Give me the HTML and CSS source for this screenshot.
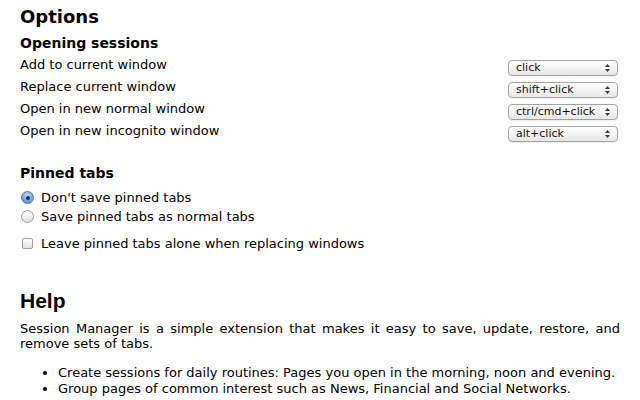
FILE: index.html
```html
<!DOCTYPE html>
<html>
<head>
<meta charset="utf-8">
<title>Options</title>
<link rel="stylesheet" href="styles.css">
</head>
<body>
<div class="page">
  <h1 class="title">Options</h1>
  <h2 class="subtitle">Opening sessions</h2>
  <div class="rows">
    <div class="row">
      <span class="label">Add to current window</span>
      <div class="select"><span class="select-text">click</span><svg class="arrows" width="5" height="8" viewBox="0 0 5 8"><path d="M2.5 0L5 3H0z M2.5 8L5 5H0z" fill="#3a3a3a"/></svg></div>
    </div>
    <div class="row">
      <span class="label">Replace current window</span>
      <div class="select"><span class="select-text">shift+click</span><svg class="arrows" width="5" height="8" viewBox="0 0 5 8"><path d="M2.5 0L5 3H0z M2.5 8L5 5H0z" fill="#3a3a3a"/></svg></div>
    </div>
    <div class="row">
      <span class="label">Open in new normal window</span>
      <div class="select"><span class="select-text">ctrl/cmd+click</span><svg class="arrows" width="5" height="8" viewBox="0 0 5 8"><path d="M2.5 0L5 3H0z M2.5 8L5 5H0z" fill="#3a3a3a"/></svg></div>
    </div>
    <div class="row">
      <span class="label">Open in new incognito window</span>
      <div class="select"><span class="select-text">alt+click</span><svg class="arrows" width="5" height="8" viewBox="0 0 5 8"><path d="M2.5 0L5 3H0z M2.5 8L5 5H0z" fill="#3a3a3a"/></svg></div>
    </div>
  </div>

  <h2 class="subtitle pinned">Pinned tabs</h2>
  <div class="choices">
    <label class="choice"><input type="radio" name="pinned" class="radio" checked><span>Don't save pinned tabs</span></label>
    <label class="choice"><input type="radio" name="pinned" class="radio"><span>Save pinned tabs as normal tabs</span></label>
    <label class="choice check-row"><input type="checkbox" class="check"><span>Leave pinned tabs alone when replacing windows</span></label>
  </div>

  <h1 class="help-title">Help</h1>
  <p class="help-text">Session Manager is a simple extension that makes it easy to save, update, restore, and remove sets of tabs.</p>
  <ul class="help-list">
    <li>Create sessions for daily routines: Pages you open in the morning, noon and evening.</li>
    <li>Group pages of common interest such as News, Financial and Social Networks.</li>
  </ul>
</div>
</body>
</html>
```

FILE: styles.css
```css
html, body {
  margin: 0;
  padding: 0;
  background: #fff;
}
body {
  font-family: "DejaVu Sans", Verdana, sans-serif;
  font-size: 13px;
  color: #000;
}
.page {
  width: 600px;
  padding: 6px 20px 0 20px;
}
.title {
  margin: 0;
  font-size: 18px;
  line-height: 22px;
  font-weight: bold;
}
.subtitle {
  margin: 6px 0 0 0;
  font-size: 14px;
  line-height: 18px;
  font-weight: bold;
}
.rows {
  margin-top: 2px;
}
.row {
  display: flex;
  justify-content: space-between;
  align-items: flex-end;
  height: 22px;
}
.label {
  line-height: 22px;
}
.select {
  box-sizing: border-box;
  width: 110px;
  height: 16px;
  margin-right: 2px;
  border: 1px solid #a3a3a3;
  border-radius: 4px;
  background: linear-gradient(#ffffff, #f3f3f3 50%, #e6e6e6);
  box-shadow: 0 1px 0 rgba(0,0,0,0.06);
  display: flex;
  align-items: center;
  justify-content: space-between;
  padding: 0 7px 0 7px;
}
.select-text {
  font-size: 11px;
  line-height: 14px;
  color: #111;
}
.arrows {
  display: block;
}
.pinned {
  margin-top: 22px;
}
.choices {
  margin-top: 6px;
}
.choice {
  display: flex;
  align-items: center;
  height: 19px;
  line-height: 19px;
}
.radio {
  -webkit-appearance: none;
  appearance: none;
  box-sizing: border-box;
  width: 13px;
  height: 13px;
  margin: 0 7px 0 1px;
  border-radius: 50%;
  border: 1px solid #9a9a9a;
  background: linear-gradient(#ffffff, #dedede);
  display: flex;
  align-items: center;
  justify-content: center;
}
.radio:checked {
  border-color: #5679b0;
  background: radial-gradient(circle at 50% 30%, #bcd9f7 0, #7fb0e6 45%, #4b86d2 100%);
}
.radio:checked::after {
  content: "";
  width: 4px;
  height: 4px;
  border-radius: 50%;
  background: #1c2f4d;
}
.check-row {
  margin-top: 8px;
}
.check {
  -webkit-appearance: none;
  appearance: none;
  box-sizing: border-box;
  width: 11px;
  height: 11px;
  margin: 0 8px 0 2px;
  border: 1px solid #a0a0a0;
  border-radius: 2px;
  background: linear-gradient(#ffffff, #e4e4e4);
}
.help-title {
  margin: 36px 0 0 0;
  font-family: "Liberation Sans", Arial, sans-serif;
  font-size: 21px;
  line-height: 24px;
  font-weight: bold;
}
.help-text {
  margin: 8px 0 0 0;
  line-height: 15px;
  text-align: justify;
}
.help-list {
  margin: 14px 0 0 0;
  padding-left: 38px;
  line-height: 16px;
}
```
